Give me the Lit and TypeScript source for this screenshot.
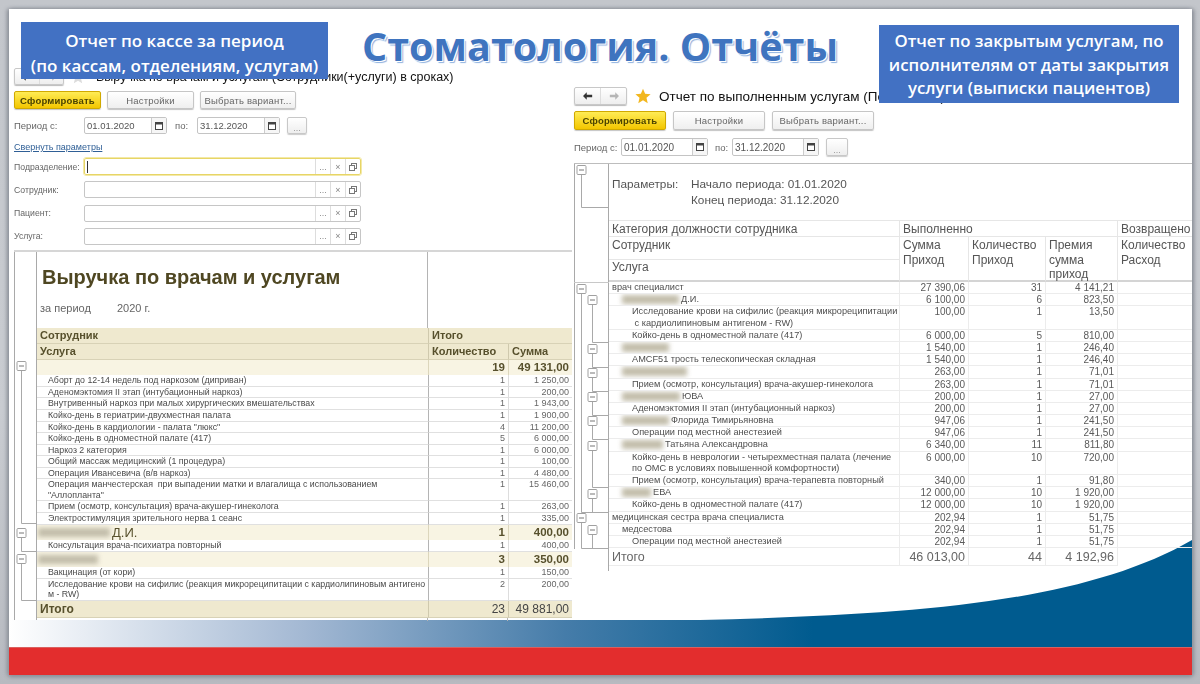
import { LitElement, html, css, svg } from "lit";
import { customElement } from "lit/decorators.js";

type LRow = { t: string; q: string; s: string; kind?: "group"; blur?: number };
type RRow = { t: string; a: string; b: string; c: string; lvl: 0 | 1 | 2; blur?: number };

const LEFT: LRow[] = [
  { t: "", q: "19", s: "49 131,00", kind: "group" },
  { t: "Аборт до 12-14 недель под наркозом (дипривaн)", q: "1", s: "1 250,00" },
  { t: "Аденомэктомия II этап (интубационный наркоз)", q: "1", s: "200,00" },
  { t: "Внутривенный наркоз при малых хирургических вмешательствах", q: "1", s: "1 943,00" },
  { t: "Койко-день в гериатрии-двухместная палата", q: "1", s: "1 900,00" },
  { t: "Койко-день в кардиологии - палата \"люкс\"", q: "4", s: "11 200,00" },
  { t: "Койко-день в одноместной палате (417)", q: "5", s: "6 000,00" },
  { t: "Наркоз 2 категория", q: "1", s: "6 000,00" },
  { t: "Общий массаж медицинский (1 процедура)", q: "1", s: "100,00" },
  { t: "Операция Ивансевича (в/в наркоз)", q: "1", s: "4 480,00" },
  { t: "Операция манчестерская  при выпадении матки и влагалища с использованием\n\"Аллопланта\"", q: "1", s: "15 460,00" },
  { t: "Прием (осмотр, консультация) врача-акушер-гинеколога", q: "1", s: "263,00" },
  { t: "Электростимуляция зрительного нерва 1 сеанс", q: "1", s: "335,00" },
  { t: "Д.И.", blur: 72, q: "1", s: "400,00", kind: "group" },
  { t: "Консультация врача-психиатра повторный", q: "1", s: "400,00" },
  { t: "", blur: 60, q: "3", s: "350,00", kind: "group" },
  { t: "Вакцинация (от кори)", q: "1", s: "150,00" },
  { t: "Исследование крови на сифилис (реакция микрореципитации с кардиолипиновым антигено\nм - RW)", q: "2", s: "200,00" },
];

const RIGHT: RRow[] = [
  { t: "врач специалист", a: "27 390,06", b: "31", c: "4 141,21", lvl: 0 },
  { t: "Д.И.", blur: 57, a: "6 100,00", b: "6", c: "823,50", lvl: 1 },
  { t: "Исследование крови на сифилис (реакция микрореципитации\n с кардиолипиновым антигеном - RW)", a: "100,00", b: "1", c: "13,50", lvl: 2 },
  { t: "Койко-день в одноместной палате (417)", a: "6 000,00", b: "5", c: "810,00", lvl: 2 },
  { t: "", blur: 47, a: "1 540,00", b: "1", c: "246,40", lvl: 1 },
  { t: "AMCF51 трость телескопическая складная", a: "1 540,00", b: "1", c: "246,40", lvl: 2 },
  { t: "", blur: 65, a: "263,00", b: "1", c: "71,01", lvl: 1 },
  { t: "Прием (осмотр, консультация) врача-акушер-гинеколога", a: "263,00", b: "1", c: "71,01", lvl: 2 },
  { t: "ЮВА", blur: 58, a: "200,00", b: "1", c: "27,00", lvl: 1 },
  { t: "Аденомэктомия II этап (интубационный наркоз)", a: "200,00", b: "1", c: "27,00", lvl: 2 },
  { t: "Флорида Тимирьяновна", blur: 47, a: "947,06", b: "1", c: "241,50", lvl: 1 },
  { t: "Операции под местной анестезией", a: "947,06", b: "1", c: "241,50", lvl: 2 },
  { t: "Татьяна Александровна", blur: 41, a: "6 340,00", b: "11", c: "811,80", lvl: 1 },
  { t: "Койко-день в неврологии - четырехместная палата (лечение\nпо ОМС в условиях повышенной комфортности)", a: "6 000,00", b: "10", c: "720,00", lvl: 2 },
  { t: "Прием (осмотр, консультация) врача-терапевта повторный", a: "340,00", b: "1", c: "91,80", lvl: 2 },
  { t: "ЕВА", blur: 29, a: "12 000,00", b: "10", c: "1 920,00", lvl: 1 },
  { t: "Койко-день в одноместной палате (417)", a: "12 000,00", b: "10", c: "1 920,00", lvl: 2 },
  { t: "медицинская сестра врача специалиста", a: "202,94", b: "1", c: "51,75", lvl: 0 },
  { t: "медсестова", a: "202,94", b: "1", c: "51,75", lvl: 1 },
  { t: "Операции под местной анестезией", a: "202,94", b: "1", c: "51,75", lvl: 2 },
];

const LINE = "#a9a9a9";
const box = (x: number, y: number) => svg`
  <rect x=${x - 4} y=${y - 4.5} width="9" height="9" rx="1" fill="#fff" stroke="#a0a0a0"/>
  <line x1=${x - 2} x2=${x + 3} y1=${y} y2=${y} stroke="#777"/>`;
const branch = (x: number, y: number, end: number, right: number) => svg`
  <path d="M${x + 0.5} ${y + 4} V${end + 0.5} H${right}" fill="none" stroke=${LINE}/>
  ${box(x, y)}`;

const blurBox = (w?: number) => (w ? html`<span class="blur" style="width:${w}px"></span>` : "");

const star = (fill: string, size: number) => html`<svg class="star" width=${size} height=${size} viewBox="0 0 24 24">
  <path fill=${fill} d="M12 1l3.2 7.6 8.2.7-6.2 5.4 1.9 8L12 18.4 4.9 22.7l1.9-8L.6 9.3l8.2-.7z"/></svg>`;

const nav = () => html`<span class="nav">
  <span class="arrow"><svg width="10" height="8" viewBox="0 0 12 9"><path d="M0 4.5L4.5 0v3H11v3H4.5v3z" fill="#333"/></svg></span>
  <span class="arrow"><svg width="10" height="8" viewBox="0 0 12 9"><path d="M12 4.5L7.5 0v3H1v3h6.5v3z" fill="#b5b5b5"/></svg></span>
</span>`;

const dateInput = (value: string) => html`<span class="date"><span class="date-val">${value}</span>
  <span class="cal"><svg width="8" height="8" viewBox="0 0 8 8"><rect x=".5" y=".5" width="7" height="7" fill="#fff" stroke="#444"/><rect x="0" y="0" width="8" height="2.5" fill="#444"/></svg></span></span>`;

const field = (label: string, focus = false) => html`<div class="field-row">
  <span class="flabel">${label}</span>
  <span class="field ${focus ? "focus" : ""}">
    <span class="field-text">${focus ? html`<i class="caret"></i>` : ""}</span>
    <span class="fbtn">...</span><span class="fbtn">×</span>
    <span class="fbtn"><svg width="8" height="8" viewBox="0 0 8 8"><rect x="2.5" y=".5" width="5" height="5" fill="none" stroke="#777"/><rect x=".5" y="2.5" width="5" height="5" fill="#fff" stroke="#777"/></svg></span>
  </span>
</div>`;

@customElement("app-root")
export class AppRoot extends LitElement {
  static styles = css`
    :host { display: block; width: 1200px; height: 684px; padding: 9px 8px 9px 9px; box-sizing: border-box;
      background: linear-gradient(#c3c6cb, #c9ccd1 60%, #b7bac0); overflow: hidden;
      font-family: "Liberation Sans", Arial, sans-serif; color: #444; }
    .slide { position: relative; width: 1183px; height: 666px; background: #fff; overflow: hidden;
      box-shadow: -2px 0 4px #8f949c, 0 2px 4px #8f949c, 2px 0 4px #8f949c; }

    .win { position: absolute; filter: blur(0.45px); }
    .win-left { left: 5px; top: 59px; width: 559px; }
    .win-right { left: 565px; top: 78px; width: 618px; }

    .titlebar { display: flex; align-items: center; color: #111; white-space: nowrap; }
    .win-left .titlebar { height: 17px; font-size: 12.5px; }
    .win-right .titlebar { height: 18px; font-size: 13.5px; }
    .nav { display: inline-flex; border: 1px solid #c8c8c8; border-radius: 2px; background: linear-gradient(#fff, #eee); box-shadow: 0 1px 1px #bbb; box-sizing: border-box; height: 100%; }
    .arrow { flex: 1; display: flex; align-items: center; justify-content: center; }
    .arrow + .arrow { border-left: 1px solid #ddd; }
    .win-left .nav { width: 50px; }
    .win-right .nav { width: 53px; }
    .star { flex: none; }
    .win-left .star { margin: 0 11px 0 7px; }
    .win-right .star { margin: 0 8px 0 8px; }

    .buttons { display: flex; }
    .btn { display: flex; align-items: center; justify-content: center; box-sizing: border-box;
      border: 1px solid #c6c6c6; border-radius: 2px; background: linear-gradient(#fff, #efefef); box-shadow: 0 1px 1px #c4c4c4; color: #666; font-size: 9.5px; letter-spacing: .2px; }
    .btn.primary { background: linear-gradient(#ffec55, #f3c600); border-color: #d0a900; color: #4b4300; font-weight: 700; }
    .win-left .buttons { margin-top: 6px; height: 18px; gap: 6px; }
    .win-left .b1 { width: 87px; } .win-left .b2 { width: 87px; } .win-left .b3 { width: 96px; }
    .win-right .buttons { margin-top: 6px; height: 19px; gap: 7px; }
    .win-right .b1 { width: 92px; } .win-right .b2 { width: 92px; } .win-right .b3 { width: 102px; }

    .period { display: flex; align-items: center; font-size: 9.5px; color: #666; }
    .win-left .period { margin-top: 8px; height: 17px; }
    .win-right .period { margin-top: 8px; height: 18px; }
    .date { display: inline-flex; box-sizing: border-box; height: 100%; border: 1px solid #c4c4c4; border-radius: 2px; background: #fff; }
    .date-val { flex: 1; padding-left: 2px; color: #555; align-self: center; }
    .win-left .date-val { font-size: 9.5px; }
    .win-right .date-val { font-size: 10px; }
    .cal { width: 14px; border-left: 1px solid #ccc; display: flex; align-items: center; justify-content: center; background: #f6f6f6; }
    .win-left .date { width: 83px; }
    .win-right .date { width: 87px; }
    .dots { box-sizing: border-box; height: 100%; border: 1px solid #c8c8c8; border-radius: 2px; background: linear-gradient(#fff, #eee); display: inline-flex; align-items: flex-end; justify-content: center; font-size: 9px; color: #999; box-shadow: 0 1px 1px #ccc; }
    .win-left .p-from { width: 70px; } .win-left .p-to { width: 22px; margin-left: 8px; } .win-left .dots { width: 20px; margin-left: 7px; }
    .win-right .p-from { width: 47px; } .win-right .p-to { width: 17px; margin-left: 7px; } .win-right .dots { width: 22px; margin-left: 7px; }

    .collapse { margin-top: 7px; height: 12px; line-height: 12px; font-size: 9px; color: #2f5f96; text-decoration: underline; }
    .fields { margin-top: 5px; display: flex; flex-direction: column; gap: 6.3px; }
    .field-row { display: flex; align-items: center; height: 17px; }
    .flabel { width: 70px; flex: none; font-size: 8.7px; color: #666; }
    .field { width: 277px; height: 100%; box-sizing: border-box; display: flex; border: 1px solid #c6c6c6; border-radius: 2px; background: #fff; }
    .field.focus { border: 1px solid #e7d566; outline: 1px solid #f3e9a8; }
    .field-text { flex: 1; display: flex; align-items: center; padding-left: 2px; }
    .caret { width: 1px; height: 12px; background: #333; }
    .fbtn { width: 14px; border-left: 1px solid #ddd; display: flex; align-items: center; justify-content: center; font-size: 9px; color: #888; }

    .report { display: flex; position: relative; border-top: 2px solid #d6d6d6; }
    .win-left .report { margin-top: 5px; width: 558px; height: 368px; }
    .gutter { flex: none; display: block; }
    .body { flex: 1; min-width: 0; display: flex; flex-direction: column; }

    /* left table */
    .lgrid { display: grid; grid-template-columns: 391px 80px 64px; }
    .lhead { height: 76px; border-right: 1px solid #b4b4b4; box-sizing: border-box; padding: 14px 0 0 5px; }
    .lhead-empty { grid-column: 2 / 4; height: 76px; }
    .ltitle { font-size: 20px; line-height: 22px; font-weight: 700; color: #4f4722; }
    .lperiod { margin: 14px 0 0 -2px; display: flex; font-size: 11px; line-height: 13px; color: #666; }
    .lperiod span:first-child { width: 77px; }
    .lc { box-sizing: border-box; white-space: pre; padding: 0 3px; overflow: hidden; }
    .lh { background: #efe9cf; font-size: 11px; font-weight: 700; color: #57502c; height: 16px; line-height: 15px; border-bottom: 1px solid #d8d2b6; }
    .span2 { grid-column: 2 / 4; }
    .bl { border-left: 1px solid #cfc9ad; }
    .ls { font-size: 8.8px; line-height: 10.55px; color: #4a4a4a; border-bottom: 1px solid #e0e0e0; padding-left: 11px; }
    .num { text-align: right; padding: 0 3px 0 0; }
    .ln { font-size: 9px; line-height: 10.55px; color: #666; border-bottom: 1px solid #e0e0e0; border-left: 1px solid #b4b4b4; }
    .ln + .ln { border-left-color: #ddd; }
    .lg { background: #f8f4e3; height: 15.5px; display: flex; align-items: center; justify-content: flex-end; font-size: 11.5px; font-weight: 700; color: #57502c; line-height: 15.5px; border-left: 1px solid #dcd6bc; padding-right: 3px; }
    .lg.name { justify-content: flex-start; padding: 0 0 0 1px; border-left: 0; font-weight: 400; font-size: 13px; }
    .lt { background: #efe9cf; font-size: 12px; font-weight: 700; color: #57502c; line-height: 16px; height: 17px; border-bottom: 1px solid #d8d2b6; display: flex; align-items: center; }
    .lt.r { justify-content: flex-end; font-weight: 400; border-left: 1px solid #cfc9ad; padding-right: 3px; color: #444; }
    .tail { height: 3px; border-right: 1px solid #b4b4b4; }
    .blur { display: inline-block; height: 9px; margin-right: 2px; background: #c2bdaa; filter: blur(2.5px); flex: none; }

    /* right table */
    .win-right .report { margin-top: 7px; border-top: 1px solid #bdbdbd; height: 407px; }
    .rgrid { display: grid; grid-template-columns: 290px 69px 77px 72px 75px; }
    .rparams { grid-column: 1 / -1; height: 56px; display: grid; grid-template-columns: 79px auto; grid-auto-rows: 16px; align-content: start; padding: 13px 0 0 3px; box-sizing: border-box; font-size: 11.8px; color: #555; }
    .rh { box-sizing: border-box; font-size: 12px; line-height: 14.5px; padding: 1px 0 0 3px; border-bottom: 1px solid #e6e6e6; color: #555; }
    .rb { border-left: 1px solid #e6e6e6; }
    .rh1 { height: 17px; border-top: 1px solid #e6e6e6; }
    .rstack { grid-column: 1; display: flex; flex-direction: column; border-bottom: 2px solid #d4d4d4; height: 45px; box-sizing: border-box; }
    .rstack .rh { flex: 1; padding-top: 1px; }
    .rstack .rh:last-child { border-bottom: 0; padding-top: 0; }
    .rtall { height: 45px; border-bottom: 2px solid #d4d4d4; padding-top: 1px; }
    .rc { box-sizing: border-box; font-size: 9.2px; line-height: 11.18px; white-space: pre; border-bottom: 1px solid #ececec; color: #4e4e4e; display: flex; align-items: flex-start; overflow: hidden; }
    .rc.l0 { padding-left: 3px; } .rc.l1 { padding-left: 13px; } .rc.l2 { padding-left: 23px; }
    .rn { justify-content: flex-end; padding-right: 3px; border-left: 1px solid #ececec; font-size: 10px; color: #5a5a5a; }
    .rempty { border-left: 1px solid #ececec; border-bottom: 1px solid #ececec; }
    .rlast { border-left: 1px solid #ececec; }
    .rtot { font-size: 12.5px; line-height: 18px; height: 18px; border-bottom: 1px solid #ececec; color: #666; padding-left: 3px; box-sizing: border-box; }
    .rtot.n { text-align: right; padding: 0 3px 0 0; border-left: 1px solid #ececec; }
    .rc .blur { margin-top: 1px; }

    .swoosh { position: absolute; left: 0; top: 0; display: block; }
    .callout { position: absolute; z-index: 3; background: #4271c3; color: #fff; box-sizing: border-box; text-align: center; white-space: nowrap;
      font-family: "Open Sans", "Noto Sans", sans-serif; font-weight: 600; }
    .c-left { left: 12px; top: 13px; width: 307px; height: 57px; font-size: 17px; line-height: 25px; padding-top: 6px; }
    .c-right { left: 870px; top: 16px; width: 300px; height: 78px; font-size: 16.8px; line-height: 23.5px; padding-top: 4px; }
    .title { position: absolute; z-index: 2; left: 353px; top: 12px; white-space: nowrap; font-family: "Open Sans", sans-serif; font-weight: 700; font-size: 39.6px; line-height: 50px;
      color: #3f74bf; text-shadow: 1px 1px 0 #fff, 2px 2px 1px #8fb2df; }
    .red { position: absolute; left: 0; top: 638px; width: 100%; height: 28px; background: #e32d2d; border-top: 1px solid #d9605f; box-sizing: border-box; }
  `;

  private leftTree() {
    const r = (y: number) => y - 252;
    return svg`<svg class="gutter" width="23" height="368" viewBox="0 0 23 368">
      <line x1=".5" x2=".5" y1="0" y2="368" stroke=${LINE}/>
      <line x1="22.5" x2="22.5" y1="0" y2="368" stroke=${LINE}/>
      ${branch(7, r(366), r(523), 23)}
      ${branch(7, r(533), r(551), 23)}
      ${branch(7, r(559), r(600), 23)}
    </svg>`;
  }

  private rightTree() {
    const r = (y: number) => y - 164;
    const l2: [number, number][] = [[300, 342], [349, 367], [373, 391], [397, 415], [421, 439], [446, 487], [494, 512]];
    return svg`<svg class="gutter" width="35" height="407" viewBox="0 0 35 407">
      <line x1=".5" x2=".5" y1="0" y2="385" stroke=${LINE}/>
      <line x1="34.5" x2="34.5" y1="0" y2="407" stroke=${LINE}/>
      <line x1="0" x2="35" y1=${r(282) + 0.5} y2=${r(282) + 0.5} stroke="#c8c8c8"/>
      ${branch(7, r(170), r(207), 35)}
      ${branch(7, r(289), r(512), 35)}
      ${l2.map(([a, b]) => branch(18, r(a), r(b), 35))}
      ${branch(7, r(518), r(548), 35)}
      ${branch(18, r(530), r(548), 35)}
    </svg>`;
  }

  private leftWindow() {
    return html`<section class="win win-left">
      <div class="titlebar">${nav()}${star("#dcdcdc", 14)}<span>Выручка по врачам и услугам (Сотрудники(+услуги) в сроках)</span></div>
      <div class="buttons">
        <span class="btn primary b1">Сформировать</span><span class="btn b2">Настройки</span><span class="btn b3">Выбрать вариант...</span>
      </div>
      <div class="period"><span class="p-from">Период с:</span>${dateInput("01.01.2020")}<span class="p-to">по:</span>${dateInput("31.12.2020")}<span class="dots">...</span></div>
      <div class="collapse">Свернуть параметры</div>
      <div class="fields">${field("Подразделение:", true)}${field("Сотрудник:")}${field("Пациент:")}${field("Услуга:")}</div>
      <div class="report">
        ${this.leftTree()}
        <div class="body">
          <div class="lgrid">
            <div class="lhead"><div class="ltitle">Выручка по врачам и услугам</div>
              <div class="lperiod"><span>за период</span><span>2020 г.</span></div></div>
            <div class="lhead-empty"></div>
            <div class="lc lh">Сотрудник</div><div class="lc lh span2 bl">Итого</div>
            <div class="lc lh">Услуга</div><div class="lc lh bl">Количество</div><div class="lc lh bl">Сумма</div>
            ${LEFT.map((row) => row.kind === "group"
              ? html`<div class="lc lg name">${blurBox(row.blur)}${row.t}</div><div class="lc lg">${row.q}</div><div class="lc lg">${row.s}</div>`
              : html`<div class="lc ls">${row.t}</div><div class="lc ln num">${row.q}</div><div class="lc ln num">${row.s}</div>`)}
            <div class="lc lt">Итого</div><div class="lc lt r">23</div><div class="lc lt r">49 881,00</div>
            <div class="tail"></div><div class="tail"></div><div></div>
          </div>
        </div>
      </div>
    </section>`;
  }

  private rightWindow() {
    return html`<section class="win win-right">
      <div class="titlebar">${nav()}${star("#f2b71f", 16)}<span>Отчет по выполненным услугам (Показатели)</span></div>
      <div class="buttons">
        <span class="btn primary b1">Сформировать</span><span class="btn b2">Настройки</span><span class="btn b3">Выбрать вариант...</span>
      </div>
      <div class="period"><span class="p-from">Период с:</span>${dateInput("01.01.2020")}<span class="p-to">по:</span>${dateInput("31.12.2020")}<span class="dots">...</span></div>
      <div class="report">
        ${this.rightTree()}
        <div class="body">
          <div class="rgrid">
            <div class="rparams"><span>Параметры:</span><span>Начало периода: 01.01.2020</span><span></span><span>Конец периода: 31.12.2020</span></div>
            <div class="rh rh1">Категория должности сотрудника</div>
            <div class="rh rh1 rb" style="grid-column: 2 / 5">Выполненно</div>
            <div class="rh rh1 rb">Возвращено</div>
            <div class="rstack"><div class="rh">Сотрудник</div><div class="rh">Услуга</div></div>
            <div class="rh rtall rb">Сумма<br />Приход</div>
            <div class="rh rtall rb">Количество<br />Приход</div>
            <div class="rh rtall rb">Премия<br />сумма<br />приход</div>
            <div class="rh rtall rb">Количество<br />Расход</div>
            ${RIGHT.map((row) => html`
              <div class="rc l${row.lvl}">${blurBox(row.blur)}<span>${row.t}</span></div>
              <div class="rc rn">${row.a}</div><div class="rc rn">${row.b}</div><div class="rc rn">${row.c}</div><div class="rempty"></div>`)}
            <div class="rtot">Итого</div><div class="rtot n">46 013,00</div><div class="rtot n">44</div><div class="rtot n">4 192,96</div><div class="rlast"></div>
          </div>
        </div>
      </div>
    </section>`;
  }

  render() {
    return html`<div class="slide">
      <svg class="swoosh" width="1183" height="666" viewBox="0 0 1183 666">
        <defs><linearGradient id="sw" x1="0" x2="1" y1="0" y2="0">
          <stop offset="0" stop-color="#fff"/><stop offset=".25" stop-color="#a3b8d3"/><stop offset=".47" stop-color="#457ca9"/><stop offset=".68" stop-color="#005b8f"/><stop offset="1" stop-color="#005b8f"/>
        </linearGradient></defs>
        <path fill="url(#sw)" d="M0 611 H691 C891 606 1071 596 1183 531 V639 H0 Z"/>
      </svg>
      ${this.leftWindow()}
      ${this.rightWindow()}
      <div class="red"></div>
      <div class="callout c-left">Отчет по кассе за период<br />(по кассам, отделениям, услугам)</div>
      <div class="title">Стоматология. Отчёты</div>
      <div class="callout c-right">Отчет по закрытым услугам, по<br />исполнителям от даты закрытия<br />услуги (выписки пациентов)</div>
    </div>`;
  }
}
